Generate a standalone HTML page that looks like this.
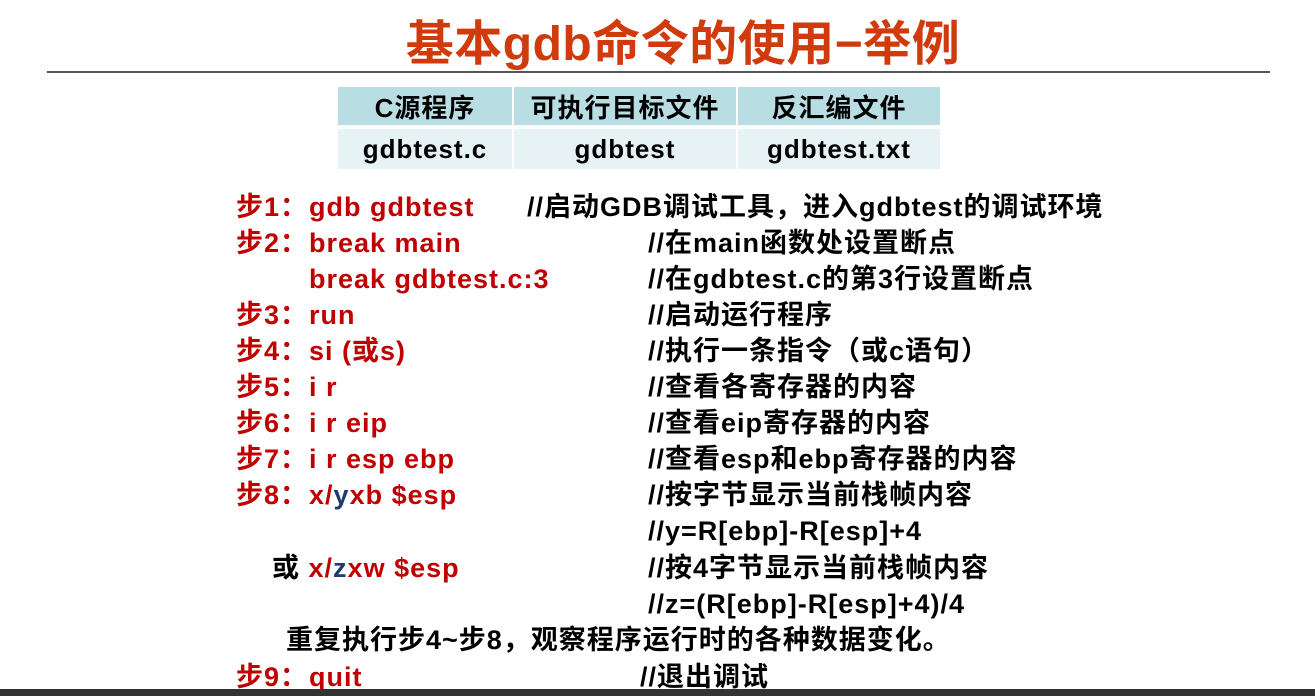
<!DOCTYPE html>
<html><head><meta charset="utf-8"><style>
html,body{margin:0;padding:0;}
body{width:1315px;height:696px;background:#fff;position:relative;overflow:hidden;font-family:"Liberation Sans","Noto Sans CJK SC",sans-serif;font-weight:bold;}
.t{position:absolute;white-space:nowrap;font-size:27px;line-height:30px;letter-spacing:1px;}
.r{color:#c00000}.k{color:#000}.n{color:#1f3a6e}
#title{position:absolute;left:0;width:1366px;text-align:center;top:15px;font-size:48px;line-height:60px;color:#d03a0c;letter-spacing:0.5px;}
#hr{position:absolute;left:47px;top:71px;width:1223px;height:2px;background:#555;}
.c{position:absolute;display:flex;align-items:center;justify-content:center;font-size:26px;letter-spacing:1px;color:#000;}
.h{background:#b8dee3;top:87px;height:38px}
.d{background:#e6f2f4;top:129px;height:40px}
#bar{position:absolute;left:0;top:689px;width:1315px;height:7px;background:#333;}
</style></head><body>
<div id="title">基本gdb命令的使用−举例</div>
<div id="hr"></div>
<div class="c h" style="left:338px;width:174px">C源程序</div>
<div class="c h" style="left:514px;width:222px">可执行目标文件</div>
<div class="c h" style="left:738px;width:202px">反汇编文件</div>
<div class="c d" style="left:338px;width:174px">gdbtest.c</div>
<div class="c d" style="left:514px;width:222px">gdbtest</div>
<div class="c d" style="left:738px;width:202px">gdbtest.txt</div>

<div class="t r" style="left:236px;top:192px">步1：</div><div class="t r" style="left:309px;top:192px">gdb gdbtest</div><div class="t k" style="left:527px;top:192px">//启动GDB调试工具，进入gdbtest的调试环境</div>
<div class="t r" style="left:236px;top:228px">步2：</div><div class="t r" style="left:309px;top:228px">break main</div><div class="t k" style="left:648px;top:228px">//在main函数处设置断点</div>
<div class="t r" style="left:309px;top:264px">break gdbtest.c:3</div><div class="t k" style="left:648px;top:264px">//在gdbtest.c的第3行设置断点</div>
<div class="t r" style="left:236px;top:300px">步3：</div><div class="t r" style="left:309px;top:300px">run</div><div class="t k" style="left:648px;top:300px">//启动运行程序</div>
<div class="t r" style="left:236px;top:336px">步4：</div><div class="t r" style="left:309px;top:336px">si (或s)</div><div class="t k" style="left:648px;top:336px">//执行一条指令（或c语句）</div>
<div class="t r" style="left:236px;top:372px">步5：</div><div class="t r" style="left:309px;top:372px">i r</div><div class="t k" style="left:648px;top:372px">//查看各寄存器的内容</div>
<div class="t r" style="left:236px;top:408px">步6：</div><div class="t r" style="left:309px;top:408px">i r eip</div><div class="t k" style="left:648px;top:408px">//查看eip寄存器的内容</div>
<div class="t r" style="left:236px;top:444px">步7：</div><div class="t r" style="left:309px;top:444px">i r esp ebp</div><div class="t k" style="left:648px;top:444px">//查看esp和ebp寄存器的内容</div>
<div class="t r" style="left:236px;top:480px">步8：</div><div class="t r" style="left:309px;top:480px">x/<span class="n">y</span>xb $esp</div><div class="t k" style="left:648px;top:480px">//按字节显示当前栈帧内容</div>
<div class="t k" style="left:648px;top:516px">//y=R[ebp]-R[esp]+4</div>
<div class="t k" style="left:272px;top:553px">或 <span class="r">x/<span class="n">z</span>xw $esp</span></div><div class="t k" style="left:648px;top:553px">//按4字节显示当前栈帧内容</div>
<div class="t k" style="left:648px;top:589px">//z=(R[ebp]-R[esp]+4)/4</div>
<div class="t k" style="left:286px;top:625px">重复执行步4~步8，观察程序运行时的各种数据变化。</div>
<div class="t r" style="left:236px;top:662px">步9：</div><div class="t r" style="left:309px;top:662px">quit</div><div class="t k" style="left:640px;top:662px">//退出调试</div>
<div id="bar"></div>
</body></html>
